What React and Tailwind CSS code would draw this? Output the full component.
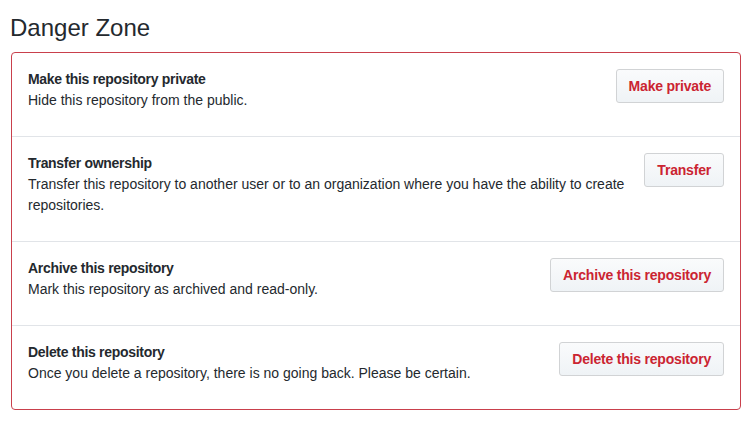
import React from 'react';

const rows = [
    {
        title: 'Make this repository private',
        text: 'Hide this repository from the public.',
        action: 'Make private',
    },
    {
        title: 'Transfer ownership',
        text: 'Transfer this repository to another user or to an organization where you have the ability to create repositories.',
        action: 'Transfer',
    },
    {
        title: 'Archive this repository',
        text: 'Mark this repository as archived and read-only.',
        action: 'Archive this repository',
    },
    {
        title: 'Delete this repository',
        text: 'Once you delete a repository, there is no going back. Please be certain.',
        action: 'Delete this repository',
    },
];

const DangerButton = ({ children }) => (
    <button className="shrink-0 h-[34px] px-3 rounded-[3px] border border-[#d1d3d5] bg-gradient-to-b from-[#fafbfc] to-[#eff3f6] text-[#cb2431] text-[14px] leading-5 font-bold tracking-[-0.2px] whitespace-nowrap">
        {children}
    </button>
);

export default function App() {
    return (
        <div className="min-h-screen bg-white text-[#24292e] font-['Liberation_Sans',Arial,sans-serif] pl-[11px] pt-[13px]">
            {/* Heading */}
            <h2 className="text-[24px] leading-[30px] font-normal -ml-px">Danger Zone</h2>

            {/* Danger box */}
            <div className="mt-[9px] w-[730px] border border-[#c9404c] rounded-[4px]">
                {rows.map((row, i) => (
                    <div
                        key={row.title}
                        className={`flex items-start px-4 pt-4 pb-[25px] ${i > 0 ? 'border-t border-[#e1e4e8]' : ''}`}
                    >
                        <div className="flex-1 pr-2 text-[14px] leading-[21px]">
                            <div className="font-bold tracking-[-0.3px]">{row.title}</div>
                            <p>{row.text}</p>
                        </div>
                        <DangerButton>{row.action}</DangerButton>
                    </div>
                ))}
            </div>
        </div>
    );
}
